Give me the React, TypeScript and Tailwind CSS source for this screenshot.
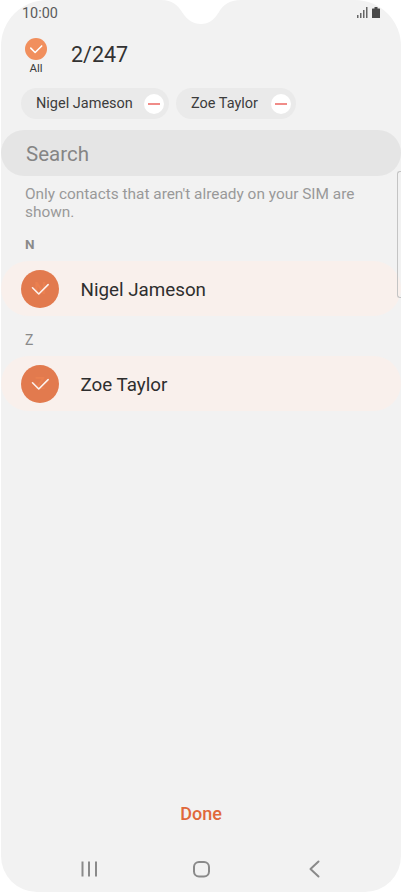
import React from "react";

const font = { fontFamily: "Roboto, sans-serif" };

const Check = ({ size = 16, width = 2 }: { size?: number; width?: number }) => (
  <svg width={size} height={size} viewBox="0 0 16 16" fill="none">
    <path d="M2 7 L7 12 L14.5 4.5" stroke="#fff" strokeWidth={width} strokeLinecap="round" strokeLinejoin="round" />
  </svg>
);

const Chip = ({ name, className }: { name: string; className: string }) => (
  <div className={`flex h-[31px] items-center justify-between rounded-full bg-[#eaeaea] pl-[15px] pr-[5px] ${className}`}>
    <span className="text-[14.5px] text-[#3c3c3c]">{name}</span>
    <span className="flex h-5 w-5 items-center justify-center rounded-full bg-white">
      <span className="h-[2px] w-[12px] bg-[#f08c88]" />
    </span>
  </div>
);

const ContactRow = ({ name, letter }: { name: string; letter: string }) => (
  <div className="flex h-[55px] items-center rounded-[28px] bg-[#f9f0ec] pl-5">
    <div className="relative flex h-[38px] w-[38px] items-center justify-center rounded-full bg-[#e27a4e]">
      <span className="absolute text-[17px] font-medium text-[#ea8050]">{letter}</span>
      <span className="relative opacity-90"><Check size={20} width={1.3} /></span>
    </div>
    <span className="ml-[21.5px] mt-[4px] text-[18.8px] text-[#2e2e2e]">{name}</span>
  </div>
);

export default function App() {
  return (
    <div className="h-[893px] w-[402px] overflow-hidden bg-white" style={font}>
      <div className="relative mx-px flex h-[892px] flex-col overflow-hidden rounded-t-[46px] rounded-b-[36px] bg-[#f2f2f2]">
        {/* notch */}
        <svg className="absolute left-[160px] top-0" width="80" height="25" viewBox="0 0 80 25">
          <path d="M0 0 C12 0 17 6 21 12 C26 20 32 24 40 24 C48 24 53 20 58 12 C62 5 68 0 80 0 Z" fill="#fff" />
        </svg>

        {/* scrollbar */}
        <div className="absolute right-0 top-[171px] h-[127px] w-[4px] rounded-l-[3px] border-y border-l border-[#c4c4c4]" />

        {/* status bar */}
        <div className="flex h-[27px] items-center justify-between pl-[21px] pr-[20px]">
          <span className="text-[14.4px] text-[#5a5a5a]">10:00</span>
          <svg className="-mt-[2px]" width="24" height="13" viewBox="0 0 24 13" fill="#666">
            <rect x="0" y="9" width="1.5" height="3" />
            <rect x="3" y="7" width="1.5" height="5" />
            <rect x="6" y="4" width="1.5" height="8" />
            <rect x="9" y="1" width="1.5" height="11" />
            <path d="M15.5 2.5 h2 v-1.5 h3 v1.5 h2 a0.5 0.5 0 0 1 0.5 0.5 v9 h-8 v-9 a0.5 0.5 0 0 1 0.5 -0.5 z" fill="#4a4a4a" />
          </svg>
        </div>

        {/* select all + count */}
        <div className="flex h-[50px] items-start pl-[20px] pt-[11px]">
          <div className="flex w-[30px] flex-col items-center">
            <span className="flex h-[22px] w-[22px] items-center justify-center rounded-full bg-[#f18f5d]">
              <Check size={14} width={1.8} />
            </span>
            <span className="mt-[1px] text-[11.5px] leading-[14px] text-[#3c3c3c]">All</span>
          </div>
          <span className="ml-[20px] mt-[3px] text-[21.5px] leading-[28px] text-[#333]">2/247</span>
        </div>

        {/* chips */}
        <div className="mt-[11px] flex gap-[7px] pl-5">
          <Chip name="Nigel Jameson" className="w-[148px]" />
          <Chip name="Zoe Taylor" className="w-[120px]" />
        </div>

        {/* search */}
        <div className="mt-[11px] flex h-[46px] items-center rounded-full bg-[#e5e5e5] pl-[25px] pt-[2px]">
          <span className="text-[20.5px] text-[#858585]">Search</span>
        </div>

        <p className="mt-[9px] pl-[24px] pr-4 text-[15.4px] leading-[18px] text-[#999]">
          Only contacts that aren't already on your SIM are shown.
        </p>

        <div className="mt-[15px] pl-[24px] text-[13.5px] font-bold leading-[16px] text-[#8a8a8a]">N</div>
        <div className="mt-[9px]">
          <ContactRow name="Nigel Jameson" letter="N" />
        </div>
        <div className="mt-[16px] pl-[24px] text-[14px] leading-[16px] text-[#8a8a8a]">Z</div>
        <div className="mt-[8px]">
          <ContactRow name="Zoe Taylor" letter="Z" />
        </div>

        {/* done */}
        <div className="mt-auto flex justify-center pb-[30px]">
          <span className="text-[18px] font-medium text-[#e0683a]">Done</span>
        </div>

        {/* nav bar */}
        <div className="mb-[9px] flex h-[26px] items-center justify-center pb-[3px]">
          <svg width="400" height="20" viewBox="0 0 400 20" fill="none" stroke="#8a8a8a" strokeWidth="2">
            <path d="M81.5 2.5 V17.5 M88 2.5 V17.5 M95 2.5 V17.5" />
            <rect x="193" y="3" width="15" height="14.5" rx="5" />
            <path d="M317.5 2.5 L309.5 10 L317.5 17.5" strokeLinecap="round" strokeLinejoin="round" />
          </svg>
        </div>
      </div>
    </div>
  );
}
